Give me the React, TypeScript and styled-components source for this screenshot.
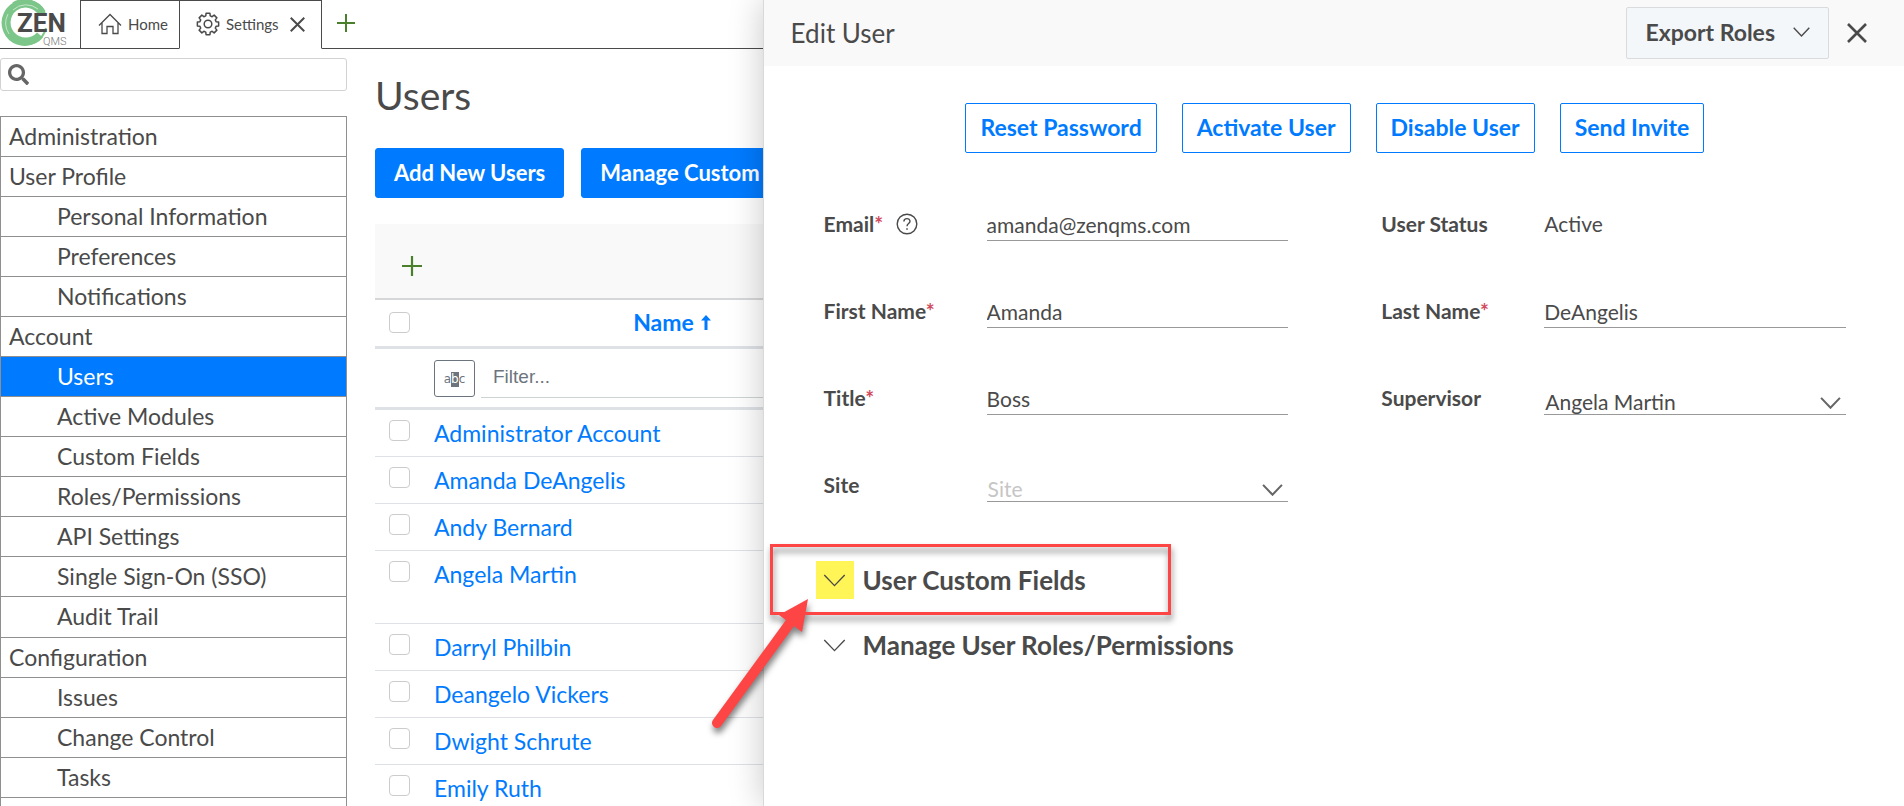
import React from 'react';
import styled, { createGlobalStyle, css } from 'styled-components';
import { FaSearch } from 'react-icons/fa';

const ink = '#4a4a4a';
const blue = '#007bff';
const red = '#fd4545';

const GlobalStyle = createGlobalStyle`
  * { box-sizing: border-box; }
  body {
    margin: 0;
    font-family: Lato, "Open Sans", sans-serif;
    font-size: 23px;
    color: ${ink};
    background: #fff;
  }
  button, input, select { font: inherit; color: inherit; }
  button { cursor: pointer; }
  a { text-decoration: none; color: inherit; }
`;

/* ---------- page frame ---------- */

const Page = styled.div`
  position: relative;
  display: flex;
  flex-direction: column;
  height: 100vh;
  overflow: hidden;
`;

const Columns = styled.div`
  display: flex;
  flex: 1;
  min-height: 0;
`;

/* ---------- top tabs ---------- */

const TopBar = styled.header`
  display: flex;
  flex: none;
  height: 49px;
`;

const LogoCell = styled.div`
  width: 80px;
  border-bottom: 1px solid ${ink};
`;

const Tab = styled.div<{ $active?: boolean }>`
  display: flex;
  align-items: center;
  border: 1px solid ${ink};
  border-right-width: ${p => (p.$active ? '1px' : '0')};
  border-bottom-color: ${p => (p.$active ? 'transparent' : ink)};
  padding: ${p => (p.$active ? '0 16px 0 16px' : '0 11px 0 17px')};
  gap: 11px;
`;

const TabLink = styled.a`
  display: flex;
  align-items: center;
  gap: 6px;
  font-size: 15px;
  line-height: 20px;
  padding-bottom: 7px;
  margin-top: 6px;
`;

const IconButton = styled.button`
  display: flex;
  align-items: center;
  justify-content: center;
  border: 0;
  background: none;
  padding: 0;
`;

const TabRest = styled.div`
  display: flex;
  flex: 1;
  align-items: center;
  padding: 0 15px 2px;
  border-bottom: 1px solid ${ink};
`;

/* ---------- sidebar ---------- */

const Sidebar = styled.aside`
  display: flex;
  flex-direction: column;
  flex: none;
  width: 347px;
  padding-top: 9px;
`;

const SearchBox = styled.label`
  display: flex;
  align-items: center;
  flex: none;
  height: 33px;
  margin-bottom: 25px;
  padding: 0 7px;
  gap: 8px;
  border: 1px solid #d2d2d2;
  border-radius: 3px;
  color: #666;
`;

const SearchInput = styled.input`
  flex: 1;
  min-width: 0;
  border: 0;
  outline: 0;
  background: none;
  font-size: 19px;
`;

const Menu = styled.nav`
  flex: 1;
  border: 1px solid #8f8f8f;
  border-bottom: 0;
`;

const MenuLink = styled.a<{ $child?: boolean; $active?: boolean }>`
  display: block;
  height: 40px;
  line-height: 39px;
  padding-left: ${p => (p.$child ? '56px' : '8px')};
  border-bottom: 1px solid #8f8f8f;
  ${p => p.$active && css`
    background: ${blue};
    color: #fff;
  `}
`;

const SubMenu = styled.div`
  a:last-child:nth-child(n + 4) { height: 41px; }
`;

/* ---------- users page ---------- */

const Main = styled.main`
  flex: 1;
  min-width: 0;
  padding: 22px 38px 0 28px;
`;

const PageTitle = styled.h1`
  margin: 0 0 29px;
  font-size: 39px;
  line-height: 48px;
  font-weight: 400;
`;

const ButtonRow = styled.div`
  display: flex;
  gap: 17px;
  margin-bottom: 26px;
`;

const PrimaryButton = styled.button`
  height: 50px;
  padding: 0 18px 2px;
  border: 1px solid ${blue};
  border-radius: 3px;
  background: ${blue};
  color: #fff;
  font-size: 22px;
  font-weight: 700;
  white-space: nowrap;
`;

const GridToolbar = styled.div`
  display: flex;
  align-items: center;
  height: 76px;
  padding: 10px 27px 0;
  background: #f9f9f9;
  border-bottom: 2px solid #d5d7d9;
`;

const UserTable = styled.table`
  width: 100%;
  table-layout: fixed;
  border-collapse: separate;
  border-spacing: 0;

  col.check { width: 59px; }
  col.name { width: 476px; }
`;

const HeadCell = styled.th`
  height: 49px;
  padding: 0 0 2px;
  border-bottom: 3px solid #dee2e6;
  color: ${blue};
  font-weight: 700;
  text-align: center;
`;

const HeadCheck = styled(HeadCell)`
  padding-left: 14px;
  text-align: left;
`;

const SortButton = styled(IconButton)`
  display: inline-flex;
  gap: 7px;
  font-weight: 700;
`;

const FilterCell = styled.td`
  height: 61px;
  padding: 0;
  border-bottom: 3px solid #dee2e6;
`;

const FilterBox = styled.div`
  display: flex;
  align-items: center;
  gap: 6px;
`;

const MatchButton = styled.button`
  display: flex;
  align-items: center;
  justify-content: center;
  width: 41px;
  height: 37px;
  padding: 2px 0 0;
  border: 1px solid #6c757d;
  border-radius: 3px;
  background: #fff;
  color: #6c757d;
  font: 12px/15px "DejaVu Sans", sans-serif;

  mark { background: #6c757d; color: #fff; }
`;

const FilterInput = styled.input`
  flex: 1;
  min-width: 0;
  height: 40px;
  padding: 0 12px 1px;
  border: 0;
  border-bottom: 1px solid #ced4d4;
  font-family: "Liberation Sans", Arial, sans-serif;
  font-size: 19px;

  &::placeholder { color: #6c757d; }
`;

const Cell = styled.td<{ $tall?: boolean }>`
  height: ${p => (p.$tall ? '73px' : '47px')};
  padding: 10px 0 0;
  border-bottom: 1px solid #dee2e6;
  vertical-align: top;
  line-height: 27px;
`;

const CheckCell = styled(Cell)`
  padding-left: 14px;
`;

const Checkbox = styled.input.attrs({ type: 'checkbox' })`
  display: block;
  appearance: none;
  width: 21px;
  height: 21px;
  margin: 0;
  border: 1px solid #ccc;
  border-radius: 4px;
  background: #fff;
`;

const UserLink = styled.a`
  color: ${blue};
`;

/* ---------- edit drawer ---------- */

const Drawer = styled.section`
  position: absolute;
  top: 0;
  right: 0;
  bottom: 0;
  width: calc(60% - 1px);
  background: #fff;
  border-left: 1px solid #d9d9d9;
  box-shadow: 0 0 32px rgba(0, 0, 0, 0.22);
`;

const DrawerHeader = styled.div`
  display: flex;
  align-items: center;
  height: 66px;
  padding: 0 37px 0 27px;
  background: #f9f9f9;
`;

const DrawerTitle = styled.h2`
  flex: 1;
  margin: 0;
  font-size: 26px;
  font-weight: 400;
`;

const ExportButton = styled.button`
  display: flex;
  align-items: center;
  gap: 18px;
  height: 52px;
  margin-right: 18px;
  padding: 0 18px 2px;
  border: 1px solid #d9dcde;
  border-radius: 2px;
  background: #f4f7fa;
  font-weight: 700;
`;

const Actions = styled.div`
  display: flex;
  justify-content: center;
  gap: 25px;
  margin: 37px 0 54px;
  padding-left: 2px;
`;

const OutlineButton = styled.button`
  height: 50px;
  padding: 0 14px 2px;
  border: 1px solid ${blue};
  border-radius: 2px;
  background: #fff;
  color: ${blue};
  font-weight: 700;
`;

const Form = styled.form`
  display: grid;
  grid-template-columns: 1fr 1fr;
  column-gap: 93px;
  row-gap: 53px;
  padding: 0 58px 0 60px;
  font-size: 21px;
`;

const Field = styled.div`
  display: grid;
  grid-template-columns: 163px 1fr;
  align-items: start;
  height: 34px;
  line-height: 34px;
`;

const LabelBox = styled.div`
  display: flex;
  align-items: center;
  gap: 13px;
  height: 34px;
  font-weight: 700;
`;

const Required = styled.span`
  color: #d04a5c;
`;

const control = css`
  display: block;
  width: 100%;
  height: 34px;
  border: 0;
  border-bottom: 1px solid #999;
  border-radius: 0;
  outline: 0;
  background: none;
`;

const TextInput = styled.input`
  ${control}
  padding: 2px 0 0;
`;

const SelectBox = styled.div`
  position: relative;

  svg {
    position: absolute;
    right: 5px;
    top: 16px;
    pointer-events: none;
  }
`;

const Select = styled.select<{ $empty?: boolean }>`
  ${control}
  appearance: none;
  padding: 4px 0 0 1px;
  color: ${p => (p.$empty ? '#c6c6c6' : ink)};
`;

const Sections = styled.div`
  position: relative;
  display: flex;
  flex-direction: column;
  align-items: flex-start;
  gap: 27px;
  padding: 59px 52px 0;
`;

const SectionToggle = styled.button`
  display: flex;
  align-items: center;
  gap: 9px;
  height: 38px;
  padding: 0;
  border: 0;
  background: none;
  font-size: 26px;
  font-weight: 700;
`;

const ToggleIcon = styled.span<{ $marked?: boolean }>`
  display: flex;
  align-items: center;
  justify-content: center;
  width: 38px;
  height: 38px;
  background: ${p => (p.$marked ? '#fff556' : 'none')};
`;

const Callout = styled.svg`
  position: absolute;
  left: -64px;
  top: 34px;
  overflow: visible;
  pointer-events: none;
  filter: drop-shadow(1px 5px 3px rgba(0, 0, 0, 0.5));
`;

/* ---------- drawings ---------- */

const Logo = () => (
  <svg width="72" height="48" viewBox="0 0 72 48" role="img" aria-label="ZEN QMS">
    <g fill="none" stroke="#7dc68a">
      <path d="M42 13A19 19 0 1 0 40 35" strokeWidth="8" />
      <path d="M46 28A22 22 0 1 1 36 4" strokeWidth="2" />
      <path d="M43 14A20 20 0 0 0 14 5" strokeWidth="6" />
      <path d="M8 14A20 20 0 0 0 9 34" strokeWidth="1" stroke="#c5e6ca" />
      <path d="M13 10A19 19 0 0 1 38 9" strokeWidth="1" stroke="#c5e6ca" />
    </g>
    <text x="17" y="32" fontFamily="Roboto, sans-serif" fontSize="26" fontWeight="700" fill={ink}>ZEN</text>
    <text x="43" y="45" fontFamily="Roboto, sans-serif" fontSize="11" fontWeight="300" fill="#777">QMS</text>
  </svg>
);

const HomeIcon = () => (
  <svg width="24" height="22" viewBox="0 0 24 22" fill="none" stroke={ink} strokeWidth="1.3">
    <path d="M1 12.5L12 1.5L23 12.5M4 9.8V20.5H9V13.5H15V20.5H20V9.8" />
  </svg>
);

const gearPath = (() => {
  const points: string[] = [];
  for (let i = 0; i < 8; i += 1) {
    const mid = (i * Math.PI) / 4;
    [[-0.27, 8.4], [-0.18, 10.8], [0.18, 10.8], [0.27, 8.4]].forEach(([turn, r]) => {
      points.push(`${(12 + r * Math.sin(mid + turn)).toFixed(2)} ${(12 - r * Math.cos(mid + turn)).toFixed(2)}`);
    });
  }
  return `M${points.join('L')}Z`;
})();

const GearIcon = () => (
  <svg width="24" height="24" viewBox="0 0 24 24" fill="none" stroke={ink} strokeWidth="1.5" strokeLinejoin="round">
    <path d={gearPath} />
    <circle cx="12" cy="12" r="3.8" />
  </svg>
);

const Cross = ({ size }: { size: number }) => (
  <svg width={size} height={size} viewBox="0 0 20 20" fill="none" stroke={ink} strokeWidth="2.6">
    <path d="M1 1L19 19M19 1L1 19" />
  </svg>
);

const Plus = ({ size }: { size: number }) => (
  <svg width={size} height={size} viewBox="0 0 20 20" fill="none" stroke="#4a7f2c" strokeWidth="2.2">
    <path d="M10 0V20M0 10H20" />
  </svg>
);

const Chevron = ({ width, stroke, color = ink }: { width: number; stroke: number; color?: string }) => (
  <svg width={width} height={Math.round(width * 0.56)} viewBox="0 0 24 14" fill="none" stroke={color} strokeWidth={stroke}>
    <path d="M1 1L12 12.5L23 1" />
  </svg>
);

const SortArrow = () => (
  <svg width="10" height="15" viewBox="0 0 10 15" fill={blue}>
    <path d="M5 0L10 5.5H6.5V15H3.5V5.5H0Z" />
  </svg>
);

const HelpIcon = () => (
  <svg width="22" height="22" viewBox="0 0 22 22" fill="none" stroke={ink} strokeWidth="1.4">
    <circle cx="11" cy="11" r="9.8" />
    <path d="M7.9 8.6C7.9 4.6 14 4.7 14 8.3C14 10.6 11 10.6 11 13.3" />
    <circle cx="11" cy="16" r="0.5" fill={ink} strokeWidth="0.8" />
  </svg>
);

/* ---------- content ---------- */

const menu = [
  { title: 'Administration', items: [] },
  { title: 'User Profile', items: ['Personal Information', 'Preferences', 'Notifications'] },
  {
    title: 'Account',
    items: ['Users', 'Active Modules', 'Custom Fields', 'Roles/Permissions', 'API Settings', 'Single Sign-On (SSO)', 'Audit Trail'],
  },
  { title: 'Configuration', items: ['Issues', 'Change Control', 'Tasks'] },
];

const users = [
  'Administrator Account',
  'Amanda DeAngelis',
  'Andy Bernard',
  'Angela Martin',
  'Darryl Philbin',
  'Deangelo Vickers',
  'Dwight Schrute',
  'Emily Ruth',
];

const FieldLabel = ({ id, text, required, children }: {
  id: string; text: string; required?: boolean; children?: React.ReactNode;
}) => (
  <LabelBox>
    <label htmlFor={id}>{text}{required && <Required>*</Required>}</label>
    {children}
  </LabelBox>
);

export default function App() {
  return (
    <Page>
      <GlobalStyle />
      <TopBar>
        <LogoCell><Logo /></LogoCell>
        <Tab>
          <TabLink href="#home"><HomeIcon />Home</TabLink>
        </Tab>
        <Tab $active>
          <TabLink href="#settings"><GearIcon />Settings</TabLink>
          <IconButton aria-label="Close Settings"><Cross size={15} /></IconButton>
        </Tab>
        <TabRest>
          <IconButton aria-label="New tab"><Plus size={18} /></IconButton>
        </TabRest>
      </TopBar>

      <Columns>
        <Sidebar>
          <SearchBox>
            <FaSearch size={21} />
            <SearchInput type="text" aria-label="Search settings" />
          </SearchBox>
          <Menu>
            {menu.map(group => (
              <React.Fragment key={group.title}>
                <MenuLink href="#">{group.title}</MenuLink>
                <SubMenu>
                  {group.items.map(item => (
                    <MenuLink key={item} href="#" $child $active={item === 'Users'}>{item}</MenuLink>
                  ))}
                </SubMenu>
              </React.Fragment>
            ))}
          </Menu>
        </Sidebar>

        <Main>
          <PageTitle>Users</PageTitle>
          <ButtonRow>
            <PrimaryButton>Add New Users</PrimaryButton>
            <PrimaryButton>Manage Custom Fields</PrimaryButton>
          </ButtonRow>
          <GridToolbar>
            <IconButton aria-label="Add user"><Plus size={20} /></IconButton>
          </GridToolbar>
          <UserTable>
            <colgroup>
              <col className="check" />
              <col className="name" />
              <col />
            </colgroup>
            <thead>
              <tr>
                <HeadCheck><Checkbox aria-label="Select all users" /></HeadCheck>
                <HeadCell><SortButton>Name<SortArrow /></SortButton></HeadCell>
                <HeadCell />
              </tr>
              <tr>
                <FilterCell />
                <FilterCell>
                  <FilterBox>
                    <MatchButton aria-label="Filter mode">a<mark>b</mark>c</MatchButton>
                    <FilterInput type="text" placeholder="Filter..." aria-label="Filter by name" />
                  </FilterBox>
                </FilterCell>
                <FilterCell />
              </tr>
            </thead>
            <tbody>
              {users.map(user => {
                const tall = user === 'Angela Martin';
                return (
                  <tr key={user}>
                    <CheckCell $tall={tall}><Checkbox aria-label={`Select ${user}`} /></CheckCell>
                    <Cell $tall={tall}><UserLink href="#">{user}</UserLink></Cell>
                    <Cell $tall={tall} />
                  </tr>
                );
              })}
            </tbody>
          </UserTable>
        </Main>
      </Columns>

      <Drawer aria-label="Edit User">
        <DrawerHeader>
          <DrawerTitle>Edit User</DrawerTitle>
          <ExportButton>Export Roles<Chevron width={17} stroke={2} /></ExportButton>
          <IconButton aria-label="Close"><Cross size={20} /></IconButton>
        </DrawerHeader>
        <Actions>
          <OutlineButton>Reset Password</OutlineButton>
          <OutlineButton>Activate User</OutlineButton>
          <OutlineButton>Disable User</OutlineButton>
          <OutlineButton>Send Invite</OutlineButton>
        </Actions>
        <Form>
          <Field>
            <FieldLabel id="email" text="Email" required>
              <IconButton type="button" aria-label="Email help"><HelpIcon /></IconButton>
            </FieldLabel>
            <TextInput id="email" type="email" defaultValue="amanda@zenqms.com" />
          </Field>
          <Field>
            <FieldLabel id="status" text="User Status" />
            <output id="status">Active</output>
          </Field>
          <Field>
            <FieldLabel id="first" text="First Name" required />
            <TextInput id="first" type="text" defaultValue="Amanda" />
          </Field>
          <Field>
            <FieldLabel id="last" text="Last Name" required />
            <TextInput id="last" type="text" defaultValue="DeAngelis" />
          </Field>
          <Field>
            <FieldLabel id="title" text="Title" required />
            <TextInput id="title" type="text" defaultValue="Boss" />
          </Field>
          <Field>
            <FieldLabel id="supervisor" text="Supervisor" />
            <SelectBox>
              <Select id="supervisor"><option>Angela Martin</option></Select>
              <Chevron width={21} stroke={2.4} color="#666" />
            </SelectBox>
          </Field>
          <Field>
            <FieldLabel id="site" text="Site" />
            <SelectBox>
              <Select id="site" $empty><option>Site</option></Select>
              <Chevron width={21} stroke={2.4} color="#666" />
            </SelectBox>
          </Field>
        </Form>
        <Sections>
          <SectionToggle aria-expanded={false}>
            <ToggleIcon $marked><Chevron width={23} stroke={1.5} /></ToggleIcon>
            User Custom Fields
          </SectionToggle>
          <SectionToggle aria-expanded={false}>
            <ToggleIcon><Chevron width={23} stroke={1.5} /></ToggleIcon>
            Manage User Roles/Permissions
          </SectionToggle>
          <Callout width="480" height="200" viewBox="0 0 480 200" aria-hidden="true">
            <rect x="71.5" y="9.5" width="398" height="68" fill="none" stroke={red} strokeWidth="3" />
            <path d="M17 187L90 87" stroke={red} strokeWidth="10" strokeLinecap="round" />
            <path d="M108 63L79 79L102 96Z" fill={red} />
          </Callout>
        </Sections>
      </Drawer>
    </Page>
  );
}
